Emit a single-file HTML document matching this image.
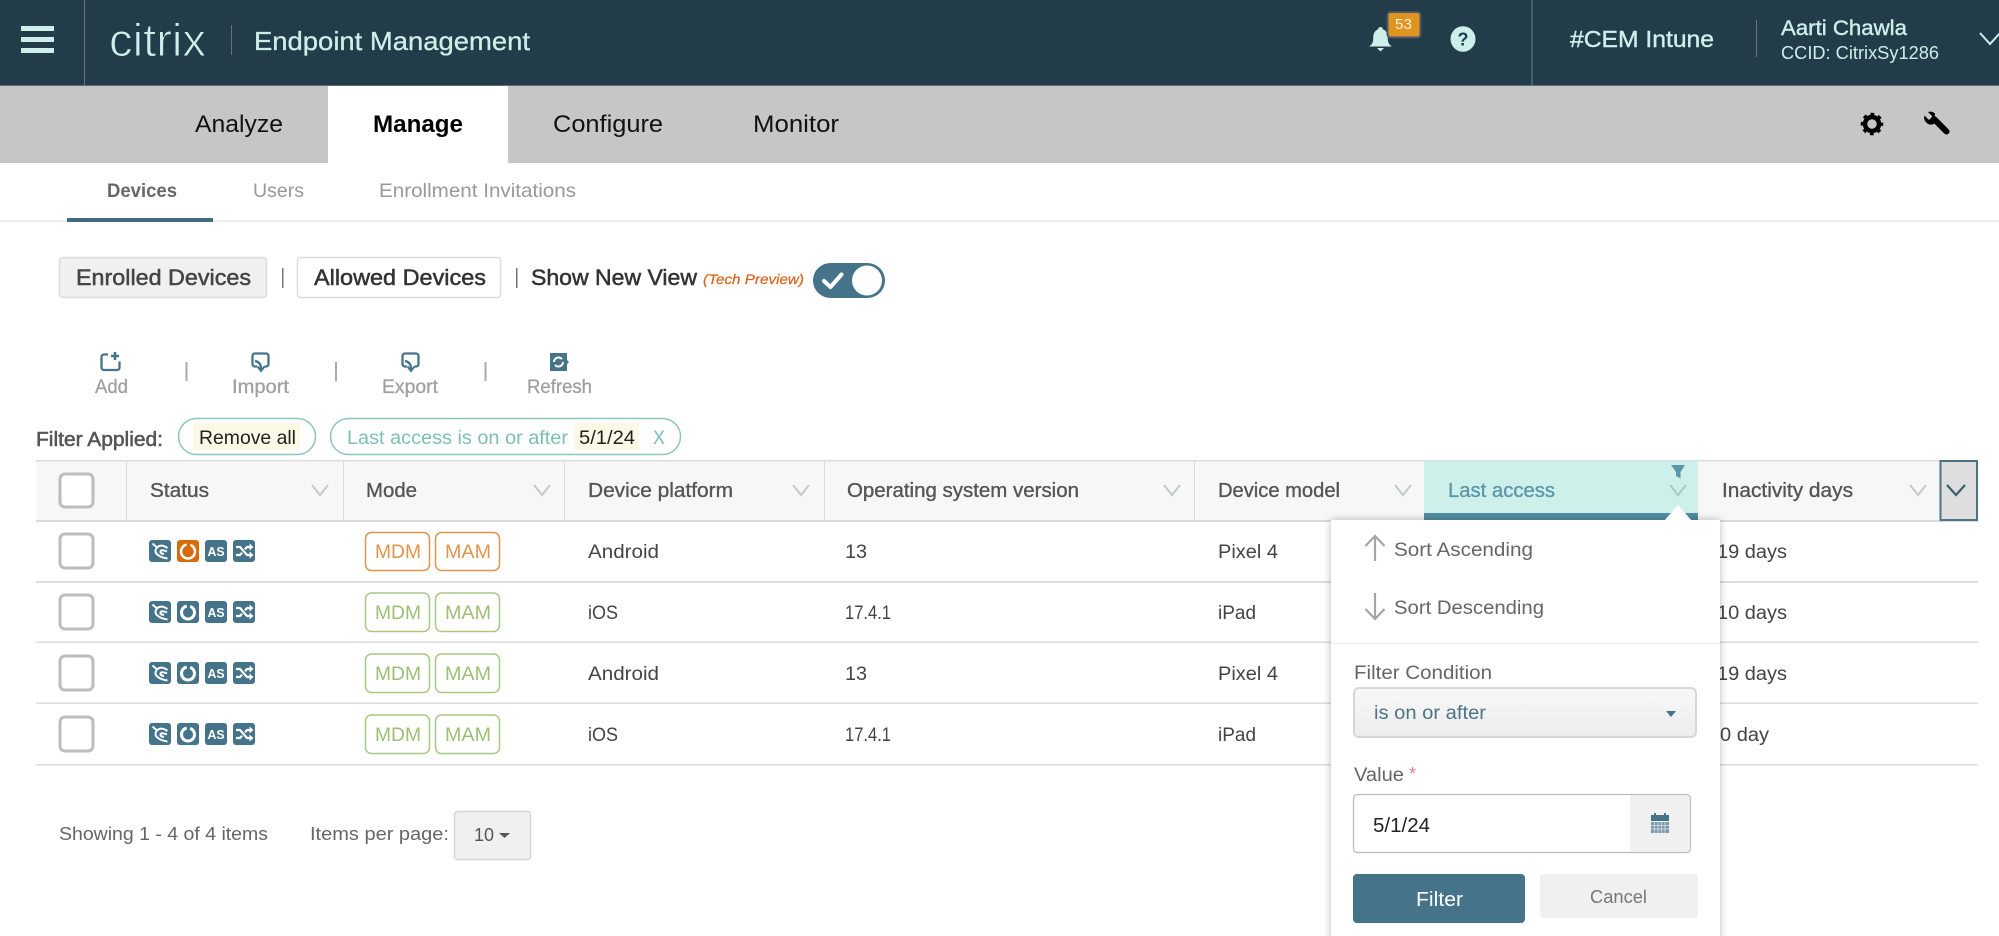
<!DOCTYPE html>
<html lang="en"><head><meta charset="utf-8"><title>Citrix Endpoint Management</title>
<style>
html,body{margin:0;padding:0;background:#fff;overflow:hidden}
svg{display:block}
text{font-family:"Liberation Sans",sans-serif;fill:#444}
</style></head><body>
<svg xmlns="http://www.w3.org/2000/svg" width="1999" height="936" viewBox="0 0 1999 936">
<defs>
<linearGradient id="g" x1="0" y1="0" x2="0" y2="1"><stop offset="0" stop-color="#f8f8f8"/><stop offset="1" stop-color="#ececec"/></linearGradient>
<g id="i1"><rect width="22" height="22" rx="3" fill="#45738a"/><path d="M3.5 3.5L8 7.500M18.500 8Q12 3.500 8 7.500Q4.500 12 9 15Q12 17.500 18.500 18.500M18 11.500Q12 9 11.500 11.500Q11 13.500 15 14" fill="none" stroke="#fff" stroke-width="2"/></g>
<g id="i2"><rect width="22" height="22" rx="3" fill="#45738a"/><circle cx="11" cy="11.500" r="6.500" fill="none" stroke="#fff" stroke-width="3" stroke-dasharray="37 4" transform="rotate(-70 11 11.500)"/></g>
<g id="i2o"><rect width="22" height="22" rx="3" fill="#d96a0a"/><circle cx="11" cy="11.500" r="7" fill="none" stroke="#fff" stroke-width="2.500" stroke-dasharray="40 4" transform="rotate(-70 11 11.500)"/><circle cx="11" cy="11.500" r="4" fill="#d96a0a"/></g>
<g id="i3"><rect width="22" height="22" rx="3" fill="#45738a"/><text x="11" y="16" text-anchor="middle" font-size="13" font-weight="700" style="fill:#fff" textLength="17" lengthAdjust="spacingAndGlyphs">AS</text></g>
<g id="i4"><rect width="22" height="22" rx="3" fill="#45738a"/><path d="M3 7h4l7 8h4M3 15h4l2-2.300M12 9.300l2-2.300h4" fill="none" stroke="#fff" stroke-width="2.200"/><path d="M16.500 3.500l4 3.500-4 3.500zM16.500 11.500l4 3.500-4 3.500z" fill="#fff"/></g>
<g id="chev"><path d="M-8-5L0 5L8-5" fill="none" stroke="#c4c9cc" stroke-width="2"/></g>
<g id="row-ic"><use href="#i1" x="149"/><use href="#i3" x="205"/><use href="#i4" x="233"/></g>
</defs>

<!-- top header -->
<rect width="1999" height="86" fill="#223c4a"/>
<rect y="85" width="1999" height="1" fill="#5c6f79"/>
<g fill="#cdeee9"><rect x="21" y="26" width="33" height="5"/><rect x="21" y="37" width="33" height="5"/><rect x="21" y="48" width="33" height="5"/></g>
<rect x="84" y="0" width="1" height="85" fill="#5e7480"/>
<text x="109" y="56" font-size="46" textLength="97" lengthAdjust="spacingAndGlyphs" style="fill:#cdeee9;stroke:#223c4a;stroke-width:1px">citrix</text>
<rect x="231" y="25" width="1" height="30" fill="#5e7480"/>
<text x="254" y="50" font-size="26" textLength="276" lengthAdjust="spacingAndGlyphs" style="fill:#cdeee9;stroke:#cdeee9;stroke-width:.3px">Endpoint Management</text>

<path d="M1380.500 27c-1.500 0-2.300 1-2.300 2.300c-4 1.500-5 5-5 9c0 4-1 6-4 8.200h22.600c-3-2.200-4-4.200-4-8.200c0-4-1-7.500-5-9c0-1.300-.8-2.300-2.300-2.300zM1377 48h7l-3.500 3.500z" fill="#cdeee9"/>
<rect x="1387.500" y="12" width="33" height="25.500" rx="3" fill="#e09420" stroke="#47566a" stroke-width="2"/>
<text x="1395" y="29" font-size="15" textLength="17" lengthAdjust="spacingAndGlyphs" style="fill:#fbefd5">53</text>
<ellipse cx="1463" cy="39" rx="12.500" ry="12.800" fill="#cdeee9"/>
<text x="1463" y="45.500" text-anchor="middle" font-size="18" font-weight="700" style="fill:#223c4a">?</text>
<rect x="1531" y="0" width="2" height="85" fill="#43606e"/>
<text x="1570" y="47" font-size="23" textLength="144" lengthAdjust="spacingAndGlyphs" style="fill:#cdeee9;stroke:#cdeee9;stroke-width:.4px">#CEM Intune</text>
<rect x="1756" y="20" width="1" height="37" fill="#5e7480"/>
<text x="1781" y="35" font-size="21" textLength="126" lengthAdjust="spacingAndGlyphs" style="fill:#cdeee9;stroke:#cdeee9;stroke-width:.4px">Aarti Chawla</text>
<text x="1781" y="59" font-size="18" textLength="158" lengthAdjust="spacingAndGlyphs" style="fill:#cdeee9">CCID: CitrixSy1286</text>
<path d="M1980 33L1990 44L2000 33" fill="none" stroke="#cdeee9" stroke-width="2"/>

<!-- main nav -->
<rect y="86" width="1999" height="77" fill="#c6c6c6"/>
<rect x="328" y="86" width="180" height="77" fill="#fff"/>
<text x="195" y="132" font-size="24" textLength="88" lengthAdjust="spacingAndGlyphs" style="fill:#111">Analyze</text>
<text x="373" y="132" font-size="24" font-weight="700" textLength="90" lengthAdjust="spacingAndGlyphs" style="fill:#000">Manage</text>
<text x="553" y="132" font-size="24" textLength="110" lengthAdjust="spacingAndGlyphs" style="fill:#111">Configure</text>
<text x="753" y="132" font-size="24" textLength="86" lengthAdjust="spacingAndGlyphs" style="fill:#111">Monitor</text>
<!-- gear -->
<circle cx="1872" cy="124" r="7" fill="none" stroke="#000" stroke-width="4.500"/>
<circle cx="1872" cy="124" r="9.800" fill="none" stroke="#000" stroke-width="3" stroke-dasharray="3.700 4" stroke-dashoffset="1.800"/>
<!-- wrench -->
<path d="M1946.500 131.500L1934 119" stroke="#000" stroke-width="6" stroke-linecap="round" fill="none"/>
<path d="M1935 113.500a7 7 0 0 0-7-1.500l4.500 4.500-3.500 3.500-4.500-4.500a7 7 0 0 0 9.500 8.500z" fill="#000"/>

<!-- sub nav -->
<rect y="220" width="1999" height="2" fill="#eeeeee"/>
<rect x="67" y="218" width="146" height="4" fill="#3f6b7f"/>
<text x="107" y="197" font-size="19.500" font-weight="700" textLength="70" lengthAdjust="spacingAndGlyphs" style="fill:#666">Devices</text>
<text x="253" y="197" font-size="19.500" textLength="51" lengthAdjust="spacingAndGlyphs" style="fill:#999">Users</text>
<text x="379" y="197" font-size="19.500" textLength="197" lengthAdjust="spacingAndGlyphs" style="fill:#999">Enrollment Invitations</text>

<!-- view buttons -->
<rect x="59.500" y="257.500" width="207" height="40" rx="3" fill="#f0f0f0" stroke="#dcdcdc" stroke-width="1.500"/>
<text x="76" y="285" font-size="22" textLength="175" lengthAdjust="spacingAndGlyphs" style="fill:#444;stroke:#444;stroke-width:.5px">Enrolled Devices</text>
<rect x="282" y="268" width="1.500" height="20" fill="#777"/>
<rect x="297.500" y="257.500" width="203" height="40" rx="3" fill="#fff" stroke="#dcdcdc" stroke-width="1.500"/>
<text x="314" y="285" font-size="22" textLength="172" lengthAdjust="spacingAndGlyphs" style="fill:#333;stroke:#333;stroke-width:.5px">Allowed Devices</text>
<rect x="516" y="268" width="1.500" height="20" fill="#777"/>
<text x="531" y="285" font-size="22" textLength="166" lengthAdjust="spacingAndGlyphs" style="fill:#333;stroke:#333;stroke-width:.5px">Show New View</text>
<text x="703" y="284" font-size="14" font-style="italic" textLength="101" lengthAdjust="spacingAndGlyphs" style="fill:#d9661f;stroke:#d9661f;stroke-width:.25px">(Tech Preview)</text>
<rect x="813" y="263" width="72" height="35" rx="17.500" fill="#45738a"/>
<circle cx="867" cy="280.500" r="15" fill="#fff"/>
<path d="M824 281l6.500 6 11-12.500" fill="none" stroke="#fff" stroke-width="4" stroke-linecap="round" stroke-linejoin="round"/>

<!-- toolbar -->
<g fill="none" stroke="#45738a" stroke-width="2.300">
<path d="M108 354.500H104a2.500 2.500 0 0 0-2.500 2.500V367.500a2.500 2.500 0 0 0 2.500 2.500H117a2.500 2.500 0 0 0 2.500-2.500V361.500"/>
<path d="M115 352v8M111 356h8" stroke-width="2.600"/>
<g id="imp"><path d="M257 366.500h-2a2.500 2.500 0 0 1-2.500-2.500v-8a2.500 2.500 0 0 1 2.500-2.500h11a2.500 2.500 0 0 1 2.500 2.500v8a2.500 2.500 0 0 1-2.500 2.500h-1.500"/><path d="M255 361Q261 362 261 369"/><path d="M257.500 366.500L261 371L264.500 366.500" stroke-width="2"/></g>
<use href="#imp" x="150"/>
</g>
<rect x="550" y="353" width="17" height="18" fill="#45738a"/><path d="M567 360l2 2-2 2z" fill="#45738a"/>
<circle cx="558.500" cy="362" r="4.500" fill="none" stroke="#fff" stroke-width="2" stroke-dasharray="11 3"/>
<text x="95" y="393" font-size="19" textLength="33" lengthAdjust="spacingAndGlyphs" style="fill:#a0a0a0;stroke:#a0a0a0;stroke-width:.3px">Add</text>
<text x="232" y="393" font-size="19" textLength="57" lengthAdjust="spacingAndGlyphs" style="fill:#a0a0a0;stroke:#a0a0a0;stroke-width:.3px">Import</text>
<text x="382" y="393" font-size="19" textLength="56" lengthAdjust="spacingAndGlyphs" style="fill:#a0a0a0;stroke:#a0a0a0;stroke-width:.3px">Export</text>
<text x="527" y="393" font-size="19" textLength="65" lengthAdjust="spacingAndGlyphs" style="fill:#a0a0a0;stroke:#a0a0a0;stroke-width:.3px">Refresh</text>
<g fill="#aaa"><rect x="185.500" y="362" width="2" height="19"/><rect x="335" y="362" width="2" height="19"/><rect x="484.500" y="362" width="2" height="19"/></g>

<!-- filter pills -->
<text x="36" y="446" font-size="20" textLength="127" lengthAdjust="spacingAndGlyphs" style="fill:#555;stroke:#555;stroke-width:.55px">Filter Applied:</text>
<rect x="178.500" y="418.500" width="137" height="36" rx="18" fill="#fff" stroke="#8cc5bb" stroke-width="1.500"/>
<rect x="193" y="423" width="107" height="27" fill="#fbf8e6"/>
<text x="199" y="444" font-size="19.500" textLength="97" lengthAdjust="spacingAndGlyphs" style="fill:#222">Remove all</text>
<rect x="330.500" y="418.500" width="350" height="36" rx="18" fill="#fff" stroke="#8cc5bb" stroke-width="1.500"/>
<text x="347" y="444" font-size="19.500" textLength="221" lengthAdjust="spacingAndGlyphs" style="fill:#7cc0b5">Last access is on or after</text>
<rect x="574" y="423" width="65" height="27" fill="#fbf8e6"/>
<text x="579" y="444" font-size="19.500" textLength="56" lengthAdjust="spacingAndGlyphs" style="fill:#222">5/1/24</text>
<text x="653" y="444" font-size="19.500" textLength="12" lengthAdjust="spacingAndGlyphs" style="fill:#7cc0b5">X</text>

<!-- table header -->
<rect x="36" y="460" width="1942" height="61" fill="#f7f7f7"/>
<rect x="36" y="460" width="1942" height="1.500" fill="#dddddd"/>
<rect x="36" y="520" width="1942" height="2" fill="#d9d9d9"/>
<g fill="#dcdcdc"><rect x="126" y="461" width="1" height="59"/><rect x="343" y="461" width="1" height="59"/><rect x="564" y="461" width="1" height="59"/><rect x="824" y="461" width="1" height="59"/><rect x="1194" y="461" width="1" height="59"/></g>
<rect x="1424" y="461" width="274" height="60" fill="#cdf0eb"/>
<rect x="1424" y="513" width="274" height="8" fill="#4f8ea1"/>
<rect x="1940.500" y="461" width="36.500" height="59" fill="#dedede" stroke="#4f7386" stroke-width="2"/>
<rect x="60" y="474" width="33" height="33" rx="5" fill="#fff" stroke="#bdbdbd" stroke-width="3"/>
<text x="150" y="497" font-size="20" textLength="59" lengthAdjust="spacingAndGlyphs" style="fill:#555;stroke:#555;stroke-width:.35px">Status</text>
<text x="366" y="497" font-size="20" textLength="51" lengthAdjust="spacingAndGlyphs" style="fill:#555;stroke:#555;stroke-width:.35px">Mode</text>
<text x="588" y="497" font-size="20" textLength="145" lengthAdjust="spacingAndGlyphs" style="fill:#555;stroke:#555;stroke-width:.35px">Device platform</text>
<text x="847" y="497" font-size="20" textLength="232" lengthAdjust="spacingAndGlyphs" style="fill:#555;stroke:#555;stroke-width:.35px">Operating system version</text>
<text x="1218" y="497" font-size="20" textLength="122" lengthAdjust="spacingAndGlyphs" style="fill:#555;stroke:#555;stroke-width:.35px">Device model</text>
<text x="1448" y="497" font-size="20" textLength="107" lengthAdjust="spacingAndGlyphs" style="fill:#5c97a8;stroke:#5c97a8;stroke-width:.35px">Last access</text>
<text x="1722" y="497" font-size="20" textLength="131" lengthAdjust="spacingAndGlyphs" style="fill:#555;stroke:#555;stroke-width:.35px">Inactivity days</text>
<use href="#chev" x="320" y="490"/><use href="#chev" x="542" y="490"/><use href="#chev" x="801" y="490"/><use href="#chev" x="1172" y="490"/><use href="#chev" x="1403" y="490"/><use href="#chev" x="1918" y="490"/>
<path d="M1670 485L1678 495L1686 485" fill="none" stroke="#a9c9c7" stroke-width="2"/>
<path d="M1671 465H1685L1680.500 472V478.500L1676 476V472Z" fill="#5c97a8"/>
<path d="M1947 485L1956 495L1965 485" fill="none" stroke="#35606f" stroke-width="2.200"/>

<!-- rows -->
<g fill="#dddddd"><rect x="36" y="581" width="1942" height="2"/><rect x="36" y="641.500" width="1942" height="1.500"/><rect x="36" y="702.500" width="1942" height="1.500"/><rect x="36" y="764" width="1942" height="1.500"/></g>

<!-- row 1 -->
<rect x="60" y="534" width="33" height="34" rx="5" fill="#fff" stroke="#bdbdbd" stroke-width="3"/>
<use href="#row-ic" y="540"/><use href="#i2o" x="177" y="540"/>
<rect x="365.500" y="532.500" width="64" height="38" rx="6" fill="#fff" stroke="#e3934a" stroke-width="1.500"/>
<rect x="435.500" y="532.500" width="64" height="38" rx="6" fill="#fff" stroke="#e3934a" stroke-width="1.500"/>
<text x="375" y="558" font-size="19" textLength="46" lengthAdjust="spacingAndGlyphs" style="fill:#e3934a">MDM</text>
<text x="445" y="558" font-size="19" textLength="46" lengthAdjust="spacingAndGlyphs" style="fill:#e3934a">MAM</text>
<text x="588" y="558" font-size="19" textLength="71" lengthAdjust="spacingAndGlyphs">Android</text>
<text x="845" y="558" font-size="19" textLength="22" lengthAdjust="spacingAndGlyphs">13</text>
<text x="1218" y="558" font-size="19" textLength="60" lengthAdjust="spacingAndGlyphs">Pixel 4</text>
<text x="1717" y="558" font-size="19" textLength="70" lengthAdjust="spacingAndGlyphs">19 days</text>

<!-- row 2 -->
<rect x="60" y="595" width="33" height="34" rx="5" fill="#fff" stroke="#bdbdbd" stroke-width="3"/>
<use href="#row-ic" y="601"/><use href="#i2" x="177" y="601"/>
<rect x="365.500" y="593" width="64" height="38.500" rx="6" fill="#fff" stroke="#a8c883" stroke-width="1.500"/>
<rect x="435.500" y="593" width="64" height="38.500" rx="6" fill="#fff" stroke="#a8c883" stroke-width="1.500"/>
<text x="375" y="619" font-size="19" textLength="46" lengthAdjust="spacingAndGlyphs" style="fill:#9cbf72">MDM</text>
<text x="445" y="619" font-size="19" textLength="46" lengthAdjust="spacingAndGlyphs" style="fill:#9cbf72">MAM</text>
<text x="588" y="619" font-size="19" textLength="30" lengthAdjust="spacingAndGlyphs">iOS</text>
<text x="845" y="619" font-size="19" textLength="46" lengthAdjust="spacingAndGlyphs">17.4.1</text>
<text x="1218" y="619" font-size="19" textLength="38" lengthAdjust="spacingAndGlyphs">iPad</text>
<text x="1717" y="619" font-size="19" textLength="70" lengthAdjust="spacingAndGlyphs">10 days</text>

<!-- row 3 -->
<rect x="60" y="656" width="33" height="34" rx="5" fill="#fff" stroke="#bdbdbd" stroke-width="3"/>
<use href="#row-ic" y="662"/><use href="#i2" x="177" y="662"/>
<rect x="365.500" y="654" width="64" height="38.500" rx="6" fill="#fff" stroke="#a8c883" stroke-width="1.500"/>
<rect x="435.500" y="654" width="64" height="38.500" rx="6" fill="#fff" stroke="#a8c883" stroke-width="1.500"/>
<text x="375" y="680" font-size="19" textLength="46" lengthAdjust="spacingAndGlyphs" style="fill:#9cbf72">MDM</text>
<text x="445" y="680" font-size="19" textLength="46" lengthAdjust="spacingAndGlyphs" style="fill:#9cbf72">MAM</text>
<text x="588" y="680" font-size="19" textLength="71" lengthAdjust="spacingAndGlyphs">Android</text>
<text x="845" y="680" font-size="19" textLength="22" lengthAdjust="spacingAndGlyphs">13</text>
<text x="1218" y="680" font-size="19" textLength="60" lengthAdjust="spacingAndGlyphs">Pixel 4</text>
<text x="1717" y="680" font-size="19" textLength="70" lengthAdjust="spacingAndGlyphs">19 days</text>

<!-- row 4 -->
<rect x="60" y="717" width="33" height="34" rx="5" fill="#fff" stroke="#bdbdbd" stroke-width="3"/>
<use href="#row-ic" y="723"/><use href="#i2" x="177" y="723"/>
<rect x="365.500" y="715" width="64" height="38.500" rx="6" fill="#fff" stroke="#a8c883" stroke-width="1.500"/>
<rect x="435.500" y="715" width="64" height="38.500" rx="6" fill="#fff" stroke="#a8c883" stroke-width="1.500"/>
<text x="375" y="741" font-size="19" textLength="46" lengthAdjust="spacingAndGlyphs" style="fill:#9cbf72">MDM</text>
<text x="445" y="741" font-size="19" textLength="46" lengthAdjust="spacingAndGlyphs" style="fill:#9cbf72">MAM</text>
<text x="588" y="741" font-size="19" textLength="30" lengthAdjust="spacingAndGlyphs">iOS</text>
<text x="845" y="741" font-size="19" textLength="46" lengthAdjust="spacingAndGlyphs">17.4.1</text>
<text x="1218" y="741" font-size="19" textLength="38" lengthAdjust="spacingAndGlyphs">iPad</text>
<text x="1720" y="741" font-size="19" textLength="49" lengthAdjust="spacingAndGlyphs">0 day</text>

<!-- pagination -->
<text x="59" y="840" font-size="18.500" textLength="209" lengthAdjust="spacingAndGlyphs" style="fill:#666">Showing 1 - 4 of 4 items</text>
<text x="310" y="840" font-size="18.500" textLength="139" lengthAdjust="spacingAndGlyphs" style="fill:#666">Items per page:</text>
<rect x="454.500" y="811.500" width="76" height="48" rx="3" fill="#f0f0f0" stroke="#d5d5d5" stroke-width="1.500"/>
<text x="474" y="841" font-size="18.500" textLength="20" lengthAdjust="spacingAndGlyphs" style="fill:#555">10</text>
<path d="M499 833h11l-5.500 5z" fill="#555"/>

<!-- popup -->
<rect x="1331" y="520" width="389" height="430" fill="#fff" style="filter:drop-shadow(0 0 4px rgba(0,0,0,.28))"/>
<path d="M1664 521L1678 505L1692 521Z" fill="#fff"/>
<g fill="none" stroke="#a5a5a5" stroke-width="2.200">
<path d="M1375 536V561M1365.500 546L1375 536L1384.500 546"/>
<path d="M1375 593V619M1365.500 609L1375 619L1384.500 609"/>
</g>
<text x="1394" y="556" font-size="19" textLength="139" lengthAdjust="spacingAndGlyphs" style="fill:#666">Sort Ascending</text>
<text x="1394" y="614" font-size="19" textLength="150" lengthAdjust="spacingAndGlyphs" style="fill:#666">Sort Descending</text>
<rect x="1331" y="643" width="389" height="1" fill="#eeeeee"/>
<text x="1354" y="679" font-size="19" textLength="138" lengthAdjust="spacingAndGlyphs" style="fill:#666">Filter Condition</text>
<rect x="1354" y="688" width="342" height="49" rx="5" fill="url(#g)" stroke="#d6d6d6" stroke-width="2"/>
<text x="1374" y="719" font-size="19" textLength="112" lengthAdjust="spacingAndGlyphs" style="fill:#4c7386">is on or after</text>
<path d="M1666 711h10l-5 6z" fill="#45738a"/>
<text x="1354" y="781" font-size="19" textLength="50" lengthAdjust="spacingAndGlyphs" style="fill:#666">Value</text>
<text x="1409" y="780" font-size="18" style="fill:#e9828c">*</text>
<rect x="1353.500" y="794.500" width="337" height="58" rx="4" fill="#fff" stroke="#bbbbbb" stroke-width="1.200"/>
<path d="M1630 795.500H1686a4 4 0 0 1 4 4V848a4 4 0 0 1-4 4H1630Z" fill="#f0f0f0"/>
<text x="1373" y="832" font-size="20" textLength="57" lengthAdjust="spacingAndGlyphs" style="fill:#222">5/1/24</text>
<rect x="1651" y="815" width="18" height="6" fill="#45738a"/>
<rect x="1654" y="813" width="2" height="3" fill="#45738a"/><rect x="1664" y="813" width="2" height="3" fill="#45738a"/>
<rect x="1651" y="822" width="18" height="11" fill="#7d9aa8"/>
<path d="M1654.500 822v11M1658 822v11M1661.500 822v11M1665 822v11M1651 825.500h18M1651 829h18" stroke="#d8e1e5" stroke-width=".8"/>
<rect x="1353" y="874" width="172" height="49" rx="4" fill="#45738a"/>
<text x="1416" y="906" font-size="20" textLength="47" lengthAdjust="spacingAndGlyphs" style="fill:#fff">Filter</text>
<rect x="1540" y="874" width="158" height="44" rx="4" fill="#f0f0f0"/>
<text x="1590" y="903" font-size="18.500" textLength="57" lengthAdjust="spacingAndGlyphs" style="fill:#777">Cancel</text>
</svg>
</body></html>
